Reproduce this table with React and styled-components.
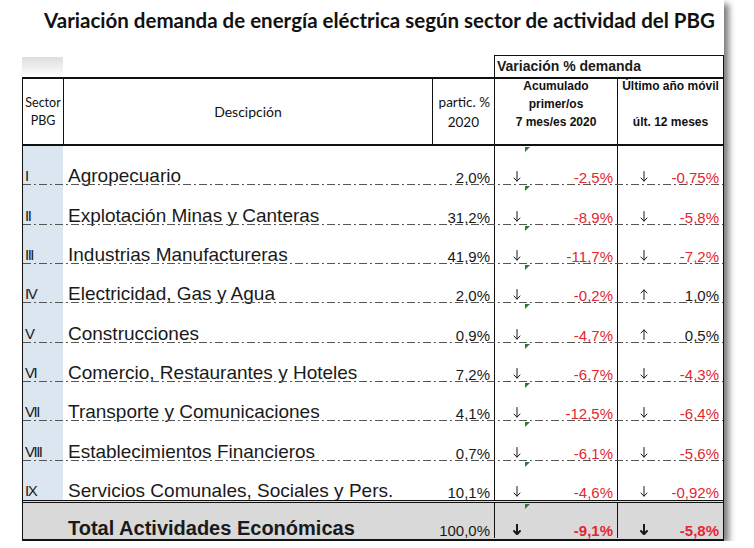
import React from 'react';
import styled, { createGlobalStyle } from 'styled-components';

const GlobalStyle = createGlobalStyle`
  body {
    margin: 0;
    background: #fff;
  }
`;

const cols = '40px 369px 62px 31px 92px 33px 73px';

const rows = [
  ['I', 'Agropecuario', '2,0%', 'down', '-2,5%', 'down', '-0,75%'],
  ['II', 'Explotación Minas y Canteras', '31,2%', 'down', '-8,9%', 'down', '-5,8%'],
  ['III', 'Industrias Manufactureras', '41,9%', 'down', '-11,7%', 'down', '-7,2%'],
  ['IV', 'Electricidad, Gas y Agua', '2,0%', 'down', '-0,2%', 'up', '1,0%'],
  ['V', 'Construcciones', '0,9%', 'down', '-4,7%', 'up', '0,5%'],
  ['VI', 'Comercio, Restaurantes y Hoteles', '7,2%', 'down', '-6,7%', 'down', '-4,3%'],
  ['VII', 'Transporte y Comunicaciones', '4,1%', 'down', '-12,5%', 'down', '-6,4%'],
  ['VIII', 'Establecimientos Financieros', '0,7%', 'down', '-6,1%', 'down', '-5,6%'],
  ['IX', 'Servicios Comunales, Sociales y Pers.', '10,1%', 'down', '-4,6%', 'down', '-0,92%'],
];

const Card = styled.div`
  margin-left: 22px;
  width: 702px;
  height: 541px;
  background: #fff;
  box-shadow: 6px 3px 6px -1px rgba(0, 0, 0, 0.5);
  display: flex;
  flex-direction: column;
  color: #1a1a1a;
`;

const Title = styled.h1`
  margin: 0;
  height: 55px;
  box-sizing: border-box;
  padding: 7px 0 0 13px;
  text-align: center;
  font-family: Lato, 'Liberation Sans', sans-serif;
  font-weight: 700;
  font-size: 20.5px;
  line-height: 26px;
  color: #111;
  white-space: nowrap;
`;

const SuperRow = styled.div`
  display: flex;
  justify-content: space-between;
  align-items: flex-end;
  height: 22px;
`;

const ShadowCap = styled.div`
  width: 41px;
  height: 20px;
  background: linear-gradient(#dedede, #fff);
`;

const SuperBox = styled.div`
  width: 230px;
  height: 22px;
  box-sizing: border-box;
  border: 1px solid #111;
  border-bottom: none;
  padding-left: 2px;
  font-family: 'Liberation Sans', Arial, sans-serif;
  font-weight: 700;
  font-size: 14px;
  line-height: 21px;
`;

const Table = styled.div`
  border-left: 1px solid #111;
  border-right: 1px solid #111;
`;

const HeaderRow = styled.div`
  display: grid;
  grid-template-columns: ${cols};
  height: 69px;
  box-sizing: border-box;
  border-top: 2px solid #111;
  border-bottom: 2px solid #111;
`;

const HeadCell = styled.div`
  grid-column: span ${(p) => p.$span || 1};
  display: flex;
  flex-direction: column;
  justify-content: ${(p) => (p.$top ? 'flex-start' : 'center')};
  gap: ${(p) => p.$gap || 0}px;
  padding-top: ${(p) => (p.$top ? 1 : 0)}px;
  border-left: ${(p) => (p.$line ? '1px solid #111' : 'none')};
  font-family: Lato, 'Liberation Sans', sans-serif;
  font-size: ${(p) => p.$size || 13}px;
  text-align: center;
  color: #111;
`;

const BoldHead = styled(HeadCell)`
  font-family: 'Liberation Sans', Arial, sans-serif;
  font-weight: 700;
  font-size: 12px;
`;

const Line = styled.span`
  display: block;
  line-height: 12px;
  text-align: ${(p) => p.$align || 'center'};
  padding-right: ${(p) => p.$pr || 0}px;
`;

const DataRow = styled.div`
  display: grid;
  grid-template-columns: ${cols};
  height: 39.33px;
  position: relative;
  font-family: 'Liberation Sans', Arial, sans-serif;

  &::after {
    content: '';
    position: absolute;
    left: 0;
    right: 0;
    bottom: 0;
    height: 1px;
    display: ${(p) => (p.$last ? 'none' : 'block')};
    background: repeating-linear-gradient(
      to right,
      #555 0 8px,
      transparent 8px 11px,
      #555 11px 13px,
      transparent 13px 16px
    );
  }
`;

const TotalRow = styled(DataRow)`
  height: 41px;
  box-sizing: border-box;
  background: #d9d9d9;
  border-top: 3px double #111;
  border-bottom: 2px solid #111;
  padding-bottom: 1px;
`;

const Cell = styled.div`
  display: flex;
  align-items: flex-end;
  position: relative;
`;

const SectorCell = styled(Cell)`
  background: ${(p) => (p.$total ? 'transparent' : '#dce6f1')};
  padding: 0 0 2px 2px;
  font-size: 15px;
  line-height: 15px;
  letter-spacing: -1.5px;
`;

const DescCell = styled(Cell)`
  padding-left: 5px;
  font-size: ${(p) => (p.$bold ? 20 : 19)}px;
  font-weight: ${(p) => (p.$bold ? 700 : 400)};
  line-height: ${(p) => (p.$bold ? 20 : 19)}px;
  white-space: nowrap;
`;

const NumCell = styled(Cell)`
  justify-content: flex-end;
  padding-right: 4px;
  font-size: 15px;
  line-height: 15px;
  font-weight: ${(p) => (p.$bold ? 700 : 400)};
  color: ${(p) => (p.$neg ? '#e3262f' : '#1a1a1a')};
`;

const ArrowCell = styled(Cell)`
  border-left: 1px solid #111;
  padding-left: ${(p) => p.$pad}px;
  padding-bottom: 3px;
`;

const ArrowSvg = styled.svg`
  display: block;
  transform: ${(p) => (p.$up ? 'rotate(180deg)' : 'none')};
`;

const Flag = styled.span`
  position: absolute;
  top: 1px;
  left: 0;
  width: 0;
  height: 0;
  border-top: 5px solid #2a7d2a;
  border-right: 5px solid transparent;
`;

const Arrow = ({ dir, bold }) => (
  <ArrowSvg $up={dir === 'up'} width="8" height="11" viewBox="0 0 8 11">
    <path
      d="M4 0.5 V10 M1 7 L4 10.2 L7 7"
      fill="none"
      stroke="#1a1a1a"
      strokeWidth={bold ? 2 : 1}
      strokeLinecap="round"
      strokeLinejoin="round"
    />
  </ArrowSvg>
);

const isNeg = (v) => v.startsWith('-');

const App = () => (
  <>
    <GlobalStyle />
    <Card>
      <Title>Variación demanda de energía eléctrica según sector de actividad del PBG</Title>
      <SuperRow>
        <ShadowCap />
        <SuperBox>Variación % demanda</SuperBox>
      </SuperRow>
      <Table>
        <HeaderRow>
          <HeadCell $gap={6} $size={12.5}>
            <Line>Sector</Line>
            <Line>PBG</Line>
          </HeadCell>
          <HeadCell $line $size={14}>
            <Line>Descipción</Line>
          </HeadCell>
          <HeadCell $line $gap={8} $size={13.5}>
            <Line $align="right" $pr={4}>partic. %</Line>
            <Line $align="right" $pr={15}>2020</Line>
          </HeadCell>
          <BoldHead $line $span={2} $top $gap={6}>
            <Line>Acumulado</Line>
            <Line>primer/os</Line>
            <Line>7 mes/es 2020</Line>
          </BoldHead>
          <BoldHead $line $span={2} $top $gap={6}>
            <Line>Último año móvil</Line>
            <Line>&nbsp;</Line>
            <Line>últ. 12 meses</Line>
          </BoldHead>
        </HeaderRow>
        {rows.map(([sec, desc, part, a1, v1, a2, v2], i) => (
          <DataRow key={sec} $last={i === rows.length - 1}>
            <SectorCell>{sec}</SectorCell>
            <DescCell>{desc}</DescCell>
            <NumCell>{part}</NumCell>
            <ArrowCell $pad={18}>
              <Arrow dir={a1} />
            </ArrowCell>
            <NumCell $neg={isNeg(v1)}>
              <Flag />
              {v1}
            </NumCell>
            <ArrowCell $pad={22}>
              <Arrow dir={a2} />
            </ArrowCell>
            <NumCell $neg={isNeg(v2)}>{v2}</NumCell>
          </DataRow>
        ))}
        <TotalRow $last>
          <SectorCell $total />
          <DescCell $bold>Total Actividades Económicas</DescCell>
          <NumCell>100,0%</NumCell>
          <ArrowCell $pad={18}>
            <Arrow dir="down" bold />
          </ArrowCell>
          <NumCell $neg $bold>
            <Flag />
            -9,1%
          </NumCell>
          <ArrowCell $pad={22}>
            <Arrow dir="down" bold />
          </ArrowCell>
          <NumCell $neg $bold>-5,8%</NumCell>
        </TotalRow>
      </Table>
    </Card>
  </>
);

export default App;
